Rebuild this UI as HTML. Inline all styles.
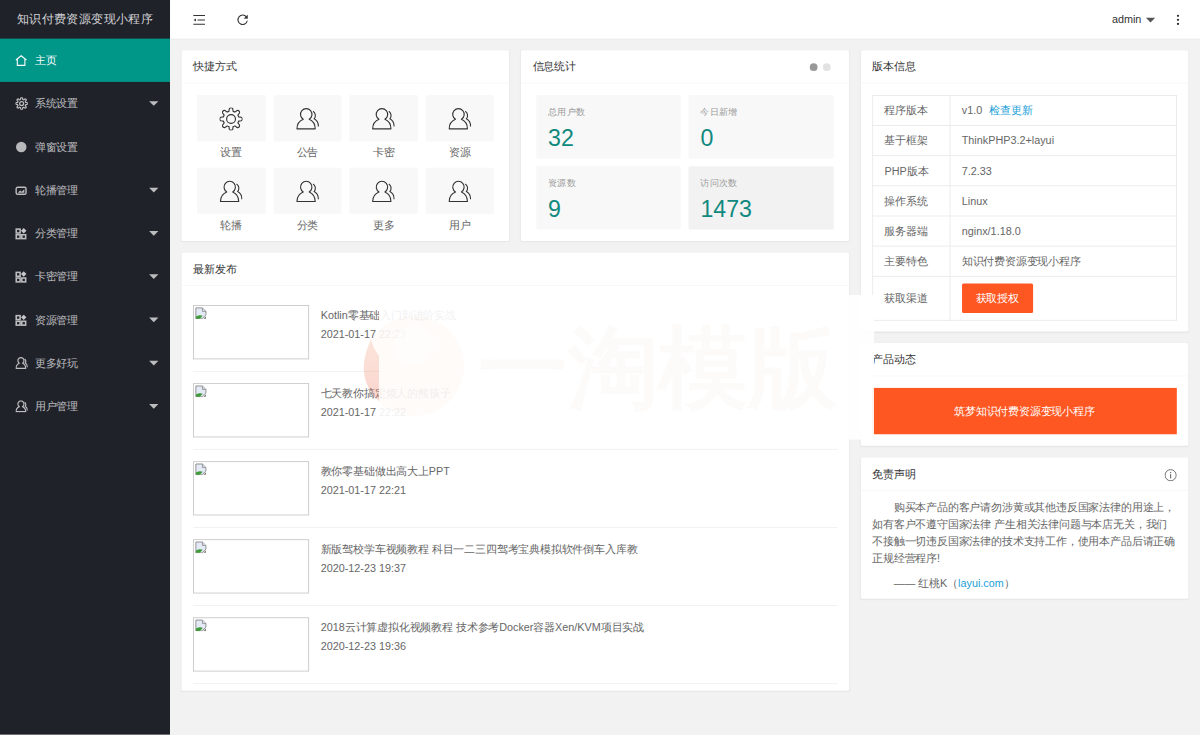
<!DOCTYPE html>
<html><head><meta charset="utf-8">
<style>
*{margin:0;padding:0;box-sizing:border-box}
html,body{width:1200px;height:735px;overflow:hidden;background:#f2f2f2}
body{font-family:"Liberation Sans",sans-serif;font-size:14px;color:#333;-webkit-text-stroke:0px}
.pg{position:absolute;left:0;top:0;width:1553px;height:951px;transform:scale(0.772698);transform-origin:0 0;background:#f2f2f2;overflow:hidden}
.side{position:absolute;left:0;top:0;width:220px;height:951px;background:#20222A}
.logo{position:absolute;left:0;top:0;width:220px;height:50px;line-height:50px;text-align:center;font-size:16px;color:rgba(255,255,255,.8);box-shadow:0 1px 2px 0 rgba(0,0,0,.15);white-space:nowrap}
.nav{position:absolute;left:0;width:220px;height:56px;line-height:56px;color:rgba(255,255,255,.7);font-size:14px;white-space:nowrap}
.nav .t{position:absolute;left:45px;top:0}
.nav.on{background:#009688;color:#fff}
.nav svg{position:absolute;left:20px;top:20px;width:16px;height:16px;overflow:visible}
.nav .more{position:absolute;right:15px;top:25px;width:0;height:0;border-left:6px solid transparent;border-right:6px solid transparent;border-top:6px solid rgba(255,255,255,.7)}
.hdr{position:absolute;left:220px;top:0;width:1333px;height:50px;background:#fff;box-shadow:0 1px 3px 0 rgba(0,0,0,.09)}
.card{position:absolute;background:#fff;border-radius:2px;box-shadow:0 1px 2px 0 rgba(0,0,0,.05)}
.ch{position:absolute;left:0;top:0;right:0;height:43px;line-height:42px;padding:0 15px;border-bottom:1px solid #f6f6f6;color:#333;font-size:14px;white-space:nowrap}
.sc{position:absolute;width:88.58px}
.sc .ib{position:absolute;left:0;top:0;width:88.58px;height:60px;background:#f8f8f8;border-radius:2px}
.sc .ib svg{position:absolute;left:29.3px;top:15.7px;width:30px;height:30px;overflow:visible}
.sc cite{position:absolute;left:0;top:62px;width:88.58px;text-align:center;font-style:normal;color:#666;font-size:14px;line-height:24px}
.bl{position:absolute;width:187.17px;height:82px;background:#f8f8f8;border-radius:2px}
.bl h3{position:absolute;left:15px;top:12px;font-size:12px;font-weight:normal;color:#999;line-height:20px;white-space:nowrap}
.bl p{position:absolute;left:15px;top:36px;font-size:30px;font-weight:300;color:#11897e;line-height:40px}
.it{position:absolute;left:15px;width:833.67px;height:101px;border-bottom:1px solid #eee}
.it .im{position:absolute;left:0;top:15px;width:150px;height:70px;border:1px solid #c0c0c0}
.it .im .bi{position:absolute;left:1px;top:1px;width:16px;height:16px}
.it .tt{position:absolute;left:165px;top:16px;line-height:24px;color:#666;white-space:nowrap}
.it .dt{position:absolute;left:165px;top:39.6px;line-height:24px;color:#666;white-space:nowrap}
table{position:absolute;left:15px;top:58px;width:394.33px;border-collapse:collapse;table-layout:fixed}
td{border:1px solid #e6e6e6;padding:9px 15px;line-height:20px;height:39px;color:#666;font-size:14px;white-space:nowrap;vertical-align:middle}
a{color:#1C9FD8;text-decoration:none}
.btn{display:inline-block;height:38px;line-height:38px;padding:0 18px;background:#FF5722;color:#fff;border-radius:2px;font-size:14px}
.txt{position:absolute;left:15px;top:53px;width:394px;line-height:22px;color:#666;font-size:14px;white-space:nowrap}
</style></head><body>
<svg width="0" height="0" style="position:absolute">
 <defs>
  <symbol id="gear" viewBox="-16 -16 32 32"><path d="M-2.91 -10.50 L-2.36 -14.10 A2.6 2.6 0 0 1 2.36 -14.10 L2.91 -10.50 A10.9 10.9 0 0 1 5.37 -9.49 L8.30 -11.64 A2.6 2.6 0 0 1 11.64 -8.30 L9.49 -5.37 A10.9 10.9 0 0 1 10.50 -2.91 L14.10 -2.36 A2.6 2.6 0 0 1 14.10 2.36 L10.50 2.91 A10.9 10.9 0 0 1 9.49 5.37 L11.64 8.30 A2.6 2.6 0 0 1 8.30 11.64 L5.37 9.49 A10.9 10.9 0 0 1 2.91 10.50 L2.36 14.10 A2.6 2.6 0 0 1 -2.36 14.10 L-2.91 10.50 A10.9 10.9 0 0 1 -5.37 9.49 L-8.30 11.64 A2.6 2.6 0 0 1 -11.64 8.30 L-9.49 5.37 A10.9 10.9 0 0 1 -10.50 2.91 L-14.10 2.36 A2.6 2.6 0 0 1 -14.10 -2.36 L-10.50 -2.91 A10.9 10.9 0 0 1 -9.49 -5.37 L-11.64 -8.30 A2.6 2.6 0 0 1 -8.30 -11.64 L-5.37 -9.49 A10.9 10.9 0 0 1 -2.91 -10.50Z" fill="none" stroke="currentColor" stroke-width="1.55" stroke-linejoin="round"/><circle cx="0" cy="0" r="6.1" fill="none" stroke="currentColor" stroke-width="1.55"/></symbol>
  <symbol id="user" viewBox="-16 -16 32 32"><path d="M-5.9 0.4 A7.9 7.9 0 1 1 2.3 0.4 C7 2.4 10.6 7.2 10.6 13.6 L-14.6 13.6 C-14.6 7.2 -10.8 2.4 -5.9 0.4Z" fill="none" stroke="currentColor" stroke-width="1.55" stroke-linejoin="round"/><path d="M7.6 -10.6 C11.2 -8.4 11.8 -3.4 9.2 -0.2 C13 1.8 15 5.8 15 10.4" fill="none" stroke="currentColor" stroke-width="1.55"/></symbol>
<symbol id="gears" viewBox="-16 -16 32 32"><path d="M-2.91 -10.50 L-2.36 -14.10 A2.6 2.6 0 0 1 2.36 -14.10 L2.91 -10.50 A10.9 10.9 0 0 1 5.37 -9.49 L8.30 -11.64 A2.6 2.6 0 0 1 11.64 -8.30 L9.49 -5.37 A10.9 10.9 0 0 1 10.50 -2.91 L14.10 -2.36 A2.6 2.6 0 0 1 14.10 2.36 L10.50 2.91 A10.9 10.9 0 0 1 9.49 5.37 L11.64 8.30 A2.6 2.6 0 0 1 8.30 11.64 L5.37 9.49 A10.9 10.9 0 0 1 2.91 10.50 L2.36 14.10 A2.6 2.6 0 0 1 -2.36 14.10 L-2.91 10.50 A10.9 10.9 0 0 1 -5.37 9.49 L-8.30 11.64 A2.6 2.6 0 0 1 -11.64 8.30 L-9.49 5.37 A10.9 10.9 0 0 1 -10.50 2.91 L-14.10 2.36 A2.6 2.6 0 0 1 -14.10 -2.36 L-10.50 -2.91 A10.9 10.9 0 0 1 -9.49 -5.37 L-11.64 -8.30 A2.6 2.6 0 0 1 -8.30 -11.64 L-5.37 -9.49 A10.9 10.9 0 0 1 -2.91 -10.50Z" fill="none" stroke="currentColor" stroke-width="3.2" stroke-linejoin="round"/><circle cx="0" cy="0" r="5.2" fill="none" stroke="currentColor" stroke-width="3.2"/></symbol><symbol id="users" viewBox="-16 -16 32 32"><path d="M-5.9 0.4 A7.9 7.9 0 1 1 2.3 0.4 C7 2.4 10.6 7.2 10.6 13.6 L-14.6 13.6 C-14.6 7.2 -10.8 2.4 -5.9 0.4Z" fill="none" stroke="currentColor" stroke-width="3" stroke-linejoin="round"/><path d="M7.6 -10.6 C11.2 -8.4 11.8 -3.4 9.2 -0.2 C13 1.8 15 5.8 15 10.4" fill="none" stroke="currentColor" stroke-width="3"/></symbol>
 </defs>
</svg>
<div class="pg">
 <!-- header -->
 <div class="hdr">
  <svg style="position:absolute;left:30px;top:17px;width:16px;height:16px" viewBox="0 0 16 16"><path d="M0 3.1H15.3M5.6 8.9H15.3M0 14.4H15.3" stroke="#333" stroke-width="1.4" fill="none"/><path d="M0.4 8.9 L3.6 6.9 L3.6 10.9Z" fill="#333"/></svg>
  <svg style="position:absolute;left:85.5px;top:18px;width:16px;height:16px;overflow:visible" viewBox="0 0 16 16"><path d="M14.04 8.85 A6.1 6.1 0 1 1 12.9 3.9" stroke="#333" stroke-width="1.4" fill="none"/><path d="M14.6 1.2 L14.6 6.2 L9.4 5.8Z" fill="#333"/></svg>
  <div style="position:absolute;left:1219px;top:0;line-height:50px;font-size:14px;color:#333">admin</div>
  <div style="position:absolute;left:1262.5px;top:22.5px;width:0;height:0;border-left:6px solid transparent;border-right:6px solid transparent;border-top:6px solid #555"></div>
  <div style="position:absolute;left:1303px;top:19px;width:3px;height:3px;border-radius:50%;background:#333;box-shadow:0 5.2px 0 #333,0 10.4px 0 #333"></div>
 </div>
 <!-- sidebar -->
 <div class="side">
  <div class="logo">知识付费资源变现小程序</div>
  <div class="nav on" style="top:50px"><svg viewBox="0 0 16 16"><path d="M0.6 7.6 L7.4 2.2 L14.2 7.6 M2.4 6.2 V14.6 H12.2 V6.2" fill="none" stroke="#fff" stroke-width="1.4" stroke-linejoin="miter"/></svg><span class="t">主页</span></div>
  <div class="nav" style="top:106px"><svg style="color:rgba(255,255,255,.7)"><use href="#gears" width="16" height="16"/></svg><span class="t">系统设置</span><i class="more"></i></div>
  <div class="nav" style="top:162px"><svg viewBox="0 0 16 16"><circle cx="7.5" cy="8.2" r="6.8" fill="rgba(255,255,255,.68)"/></svg><span class="t">弹窗设置</span></div>
  <div class="nav" style="top:218px"><svg viewBox="0 0 16 16"><rect x="0.9" y="4.4" width="12.8" height="9" rx="2" fill="none" stroke="rgba(255,255,255,.7)" stroke-width="1.8"/><path d="M3 11.5 L6 8.5 L8 10 L11.5 7 V11.5Z" fill="rgba(255,255,255,.7)"/></svg><span class="t">轮播管理</span><i class="more"></i></div>
  <div class="nav" style="top:274px"><svg viewBox="0 0 16 16"><g fill="none" stroke="rgba(255,255,255,.7)" stroke-width="2"><rect x="1" y="2.5" width="5" height="5"/><rect x="1" y="9.8" width="5" height="5"/><rect x="8.2" y="9.8" width="5" height="5"/></g><path d="M10.7 1.2 L14.2 4.7 L10.7 8.2 L7.2 4.7Z" fill="rgba(255,255,255,.75)"/></svg><span class="t">分类管理</span><i class="more"></i></div>
  <div class="nav" style="top:330px"><svg viewBox="0 0 16 16"><g fill="none" stroke="rgba(255,255,255,.7)" stroke-width="2"><rect x="1" y="2.5" width="5" height="5"/><rect x="1" y="9.8" width="5" height="5"/><rect x="8.2" y="9.8" width="5" height="5"/></g><path d="M10.7 1.2 L14.2 4.7 L10.7 8.2 L7.2 4.7Z" fill="rgba(255,255,255,.75)"/></svg><span class="t">卡密管理</span><i class="more"></i></div>
  <div class="nav" style="top:386px"><svg viewBox="0 0 16 16"><g fill="none" stroke="rgba(255,255,255,.7)" stroke-width="2"><rect x="1" y="2.5" width="5" height="5"/><rect x="1" y="9.8" width="5" height="5"/><rect x="8.2" y="9.8" width="5" height="5"/></g><path d="M10.7 1.2 L14.2 4.7 L10.7 8.2 L7.2 4.7Z" fill="rgba(255,255,255,.75)"/></svg><span class="t">资源管理</span><i class="more"></i></div>
  <div class="nav" style="top:442px"><svg style="color:rgba(255,255,255,.7)"><use href="#users" width="16" height="16"/></svg><span class="t">更多好玩</span><i class="more"></i></div>
  <div class="nav" style="top:498px"><svg style="color:rgba(255,255,255,.7)"><use href="#users" width="16" height="16"/></svg><span class="t">用户管理</span><i class="more"></i></div>
 </div>

 <!-- card A shortcuts -->
 <div class="card" style="left:235px;top:65px;width:424.33px;height:247px"><div class="ch">快捷方式</div>
  <div class="sc" style="left:20px;top:58px"><div class="ib"><svg style="color:#333"><use href="#gear"/></svg></div><cite>设置</cite></div>
  <div class="sc" style="left:118.58px;top:58px"><div class="ib"><svg style="color:#333"><use href="#user"/></svg></div><cite>公告</cite></div>
  <div class="sc" style="left:217.17px;top:58px"><div class="ib"><svg style="color:#333"><use href="#user"/></svg></div><cite>卡密</cite></div>
  <div class="sc" style="left:315.75px;top:58px"><div class="ib"><svg style="color:#333"><use href="#user"/></svg></div><cite>资源</cite></div>
  <div class="sc" style="left:20px;top:152px"><div class="ib"><svg style="color:#333"><use href="#user"/></svg></div><cite>轮播</cite></div>
  <div class="sc" style="left:118.58px;top:152px"><div class="ib"><svg style="color:#333"><use href="#user"/></svg></div><cite>分类</cite></div>
  <div class="sc" style="left:217.17px;top:152px"><div class="ib"><svg style="color:#333"><use href="#user"/></svg></div><cite>更多</cite></div>
  <div class="sc" style="left:315.75px;top:152px"><div class="ib"><svg style="color:#333"><use href="#user"/></svg></div><cite>用户</cite></div>
 </div>

 <!-- card B stats -->
 <div class="card" style="left:674.33px;top:65px;width:424.33px;height:247px"><div class="ch">信息统计</div>
  <div style="position:absolute;left:374px;top:17px;width:10px;height:10px;border-radius:50%;background:#999"></div>
  <div style="position:absolute;left:391px;top:17px;width:10px;height:10px;border-radius:50%;background:#e2e2e2"></div>
  <div class="bl" style="left:20px;top:58px"><h3>总用户数</h3><p>32</p></div>
  <div class="bl" style="left:217.17px;top:58px"><h3>今日新增</h3><p>0</p></div>
  <div class="bl" style="left:20px;top:150px"><h3>资源数</h3><p>9</p></div>
  <div class="bl" style="left:217.17px;top:150px;background:#f2f2f2"><h3>访问次数</h3><p>1473</p></div>
 </div>

 <!-- card C news -->
 <div class="card" style="left:235px;top:327px;width:863.67px;height:567px"><div class="ch">最新发布</div>
  <div class="it" style="top:53px"><div class="im"><svg class="bi" viewBox="0 0 16 16"><path d="M1.5 1.5H10L14.5 6V10.5L9.5 15.5H1.5Z" fill="#e4eaf6" stroke="#8a8a8a" stroke-width="1.2" stroke-linejoin="miter"/><path d="M10 1.5V6H14.5" fill="#cfd6e4" stroke="#8a8a8a" stroke-width="1"/><path d="M1.5 15.5V12.8C4 10.8 7.5 10.2 10.5 11.6L6.5 15.5Z" fill="#3f9a3a"/><path d="M14.5 12.2V15.5H11.2Z" fill="#7a7a7a"/></svg></div><div class="tt">Kotlin零基础入门到进阶实战</div><div class="dt">2021-01-17 22:23</div></div>
  <div class="it" style="top:154px"><div class="im"><svg class="bi" viewBox="0 0 16 16"><path d="M1.5 1.5H10L14.5 6V10.5L9.5 15.5H1.5Z" fill="#e4eaf6" stroke="#8a8a8a" stroke-width="1.2" stroke-linejoin="miter"/><path d="M10 1.5V6H14.5" fill="#cfd6e4" stroke="#8a8a8a" stroke-width="1"/><path d="M1.5 15.5V12.8C4 10.8 7.5 10.2 10.5 11.6L6.5 15.5Z" fill="#3f9a3a"/><path d="M14.5 12.2V15.5H11.2Z" fill="#7a7a7a"/></svg></div><div class="tt">七天教你搞定烦人的熊孩子</div><div class="dt">2021-01-17 22:22</div></div>
  <div class="it" style="top:255px"><div class="im"><svg class="bi" viewBox="0 0 16 16"><path d="M1.5 1.5H10L14.5 6V10.5L9.5 15.5H1.5Z" fill="#e4eaf6" stroke="#8a8a8a" stroke-width="1.2" stroke-linejoin="miter"/><path d="M10 1.5V6H14.5" fill="#cfd6e4" stroke="#8a8a8a" stroke-width="1"/><path d="M1.5 15.5V12.8C4 10.8 7.5 10.2 10.5 11.6L6.5 15.5Z" fill="#3f9a3a"/><path d="M14.5 12.2V15.5H11.2Z" fill="#7a7a7a"/></svg></div><div class="tt">教你零基础做出高大上PPT</div><div class="dt">2021-01-17 22:21</div></div>
  <div class="it" style="top:356px"><div class="im"><svg class="bi" viewBox="0 0 16 16"><path d="M1.5 1.5H10L14.5 6V10.5L9.5 15.5H1.5Z" fill="#e4eaf6" stroke="#8a8a8a" stroke-width="1.2" stroke-linejoin="miter"/><path d="M10 1.5V6H14.5" fill="#cfd6e4" stroke="#8a8a8a" stroke-width="1"/><path d="M1.5 15.5V12.8C4 10.8 7.5 10.2 10.5 11.6L6.5 15.5Z" fill="#3f9a3a"/><path d="M14.5 12.2V15.5H11.2Z" fill="#7a7a7a"/></svg></div><div class="tt">新版驾校学车视频教程 科目一二三四驾考宝典模拟软件倒车入库教</div><div class="dt">2020-12-23 19:37</div></div>
  <div class="it" style="top:457px"><div class="im"><svg class="bi" viewBox="0 0 16 16"><path d="M1.5 1.5H10L14.5 6V10.5L9.5 15.5H1.5Z" fill="#e4eaf6" stroke="#8a8a8a" stroke-width="1.2" stroke-linejoin="miter"/><path d="M10 1.5V6H14.5" fill="#cfd6e4" stroke="#8a8a8a" stroke-width="1"/><path d="M1.5 15.5V12.8C4 10.8 7.5 10.2 10.5 11.6L6.5 15.5Z" fill="#3f9a3a"/><path d="M14.5 12.2V15.5H11.2Z" fill="#7a7a7a"/></svg></div><div class="tt">2018云计算虚拟化视频教程 技术参考Docker容器Xen/KVM项目实战</div><div class="dt">2020-12-23 19:36</div></div>
 </div>

 <!-- card D version -->
 <div class="card" style="left:1113.67px;top:65px;width:424.33px;height:364px"><div class="ch">版本信息</div>
  <table>
   <colgroup><col style="width:100px"><col></colgroup>
   <tr><td>程序版本</td><td>v1.0 <a style="margin-left:5px">检查更新</a></td></tr>
   <tr><td>基于框架</td><td>ThinkPHP3.2+layui</td></tr>
   <tr><td>PHP版本</td><td>7.2.33</td></tr>
   <tr><td>操作系统</td><td>Linux</td></tr>
   <tr><td>服务器端</td><td>nginx/1.18.0</td></tr>
   <tr><td>主要特色</td><td>知识付费资源变现小程序</td></tr>
   <tr><td style="height:57px">获取渠道</td><td style="height:57px"><span class="btn">获取授权</span></td></tr>
  </table>
 </div>

 <!-- card E -->
 <div class="card" style="left:1113.67px;top:444px;width:424.33px;height:133px"><div class="ch">产品动态</div>
  <div style="position:absolute;left:15px;top:58px;width:394.33px;height:60px;line-height:60px;background:#FF5722;color:#fff;text-align:center;font-size:14px">筑梦知识付费资源变现小程序</div>
 </div>

 <!-- card F -->
 <div class="card" style="left:1113.67px;top:592px;width:424.33px;height:183px"><div class="ch">免责声明</div>
  <svg style="position:absolute;left:393px;top:14.5px;width:16px;height:16px" viewBox="0 0 16 16"><circle cx="8" cy="8" r="7.2" fill="none" stroke="#666" stroke-width="1.2"/><rect x="7.3" y="6.6" width="1.4" height="5.6" fill="#666"/><rect x="7.3" y="3.8" width="1.4" height="1.6" fill="#666"/></svg>
  <div class="txt"><span style="padding-left:28px">购买本产品的客户请勿涉黄或其他违反国家法律的用途上，</span><br>如有客户不遵守国家法律 产生相关法律问题与本店无关，我们<br>不接触一切违反国家法律的技术支持工作，使用本产品后请正确<br>正规经营程序!<div style="margin-top:11px;padding-left:28px">—— 红桃K（<a>layui.com</a>）</div></div>
 </div>

 <!-- watermark -->
</div>
<svg style="position:absolute;left:0;top:0;width:1200px;height:735px;pointer-events:none" viewBox="0 0 1200 735">
 <defs><linearGradient id="fl" x1="0" y1="0" x2="0" y2="1"><stop offset="0" stop-color="#f6a07a" stop-opacity=".24"/><stop offset="1" stop-color="#ec6a5a" stop-opacity=".27"/></linearGradient></defs>
 <path d="M371 339 C366 350 363 362 364 372 C365 385 372 395 379 401 L379 356 C375 350 372 345 371 339Z" fill="url(#fl)"/>
 <rect x="379" y="295" width="495" height="144.6" fill="rgba(255,255,255,.9)"/>
 <circle cx="414" cy="366" r="50" fill="rgba(240,130,90,.035)"/>
 <circle cx="414" cy="345" r="20" fill="rgba(255,255,255,.5)"/>
</svg>
<div style="position:absolute;left:477.5px;top:313.7px;font-size:89.6px;line-height:108px;font-weight:bold;color:rgba(225,190,170,.055);white-space:nowrap">一淘模版</div>
</body></html>
